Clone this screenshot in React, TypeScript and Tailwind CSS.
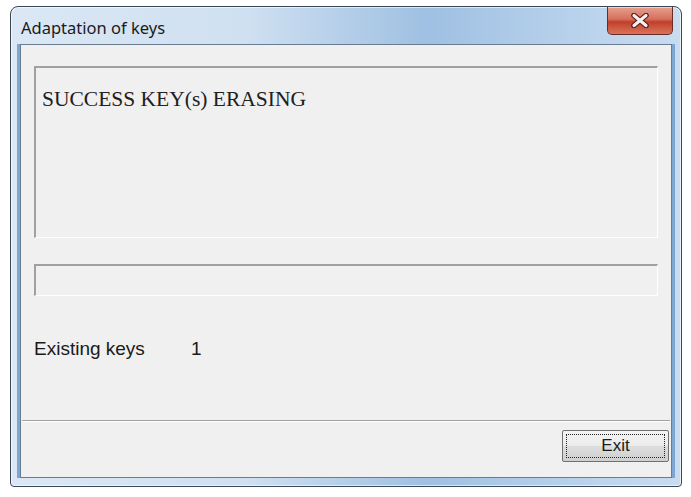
import { useState } from "react";

function CloseGlyph() {
  return (
    <svg width="20" height="15" viewBox="0 0 20 15" aria-hidden="true">
      <path d="M4 2.5 L16 12.5 M16 2.5 L4 12.5" stroke="#5a1a14" strokeWidth="5.5" strokeLinecap="round" />
      <path d="M4 2.5 L16 12.5 M16 2.5 L4 12.5" stroke="#f4f1f0" strokeWidth="3.2" strokeLinecap="round" />
    </svg>
  );
}

export default function App() {
  const [keys] = useState(1);

  return (
    <div className="h-[497px] w-[691px] bg-white pl-[10px] pt-[6px] font-['Liberation_Sans',Arial,sans-serif]">
      <div className="flex h-[481px] w-[672px] flex-col rounded-t-[8px] rounded-b-[4px] border border-[#3a4756] bg-[linear-gradient(90deg,#dbe7f4_0%,#cfe0f1_35%,#9fc0e2_62%,#b9d2ec_85%,#c9dcf0_100%)] px-[9px] pb-[8px] shadow-[inset_0_0_0_1px_rgba(255,255,255,0.6)]">
        {/* Title bar */}
        <div className="flex h-[37px] items-start">
          <span className="mt-[11px] ml-[1px] font-['Noto_Sans',sans-serif] text-[16.5px] leading-[20px] text-[#1b1b1b]">
            Adaptation of keys
          </span>
          <button className="ml-auto mr-[-1px] flex h-[28px] w-[66px] items-center justify-center rounded-b-[5px] border border-t-0 border-[#6b2a23] bg-[linear-gradient(180deg,#e7a08f_0%,#d4705c_45%,#c0402a_55%,#d9735c_100%)] shadow-[inset_0_1px_0_rgba(255,255,255,0.5)]">
            <CloseGlyph />
          </button>
        </div>

        {/* Client area */}
        <div className="flex flex-1 flex-col border border-[#6a7c90] bg-[#f0f0f0] shadow-[-3px_0_0_#7ea6d3,3px_0_0_#7ea6d3]">
          <div className="mx-[13px] mt-[21px] h-[172px] border-t-2 border-l-2 border-r border-b border-t-[#a0a0a0] border-l-[#a0a0a0] border-r-white border-b-white px-[6px] pt-[18px]">
            <p className="font-['Liberation_Serif','Times_New_Roman',serif] text-[21.5px] leading-[26px] text-[#202020]">
              SUCCESS KEY(s) ERASING
            </p>
          </div>

          <div className="mx-[13px] mt-[26px] h-[32px] border-t-2 border-l-2 border-r border-b border-t-[#a0a0a0] border-l-[#a0a0a0] border-r-white border-b-white" />

          <div className="ml-[13px] mt-[42px] flex items-center text-[19px] leading-[22px] text-[#1a1a1a]">
            <span className="w-[157px]">Existing keys</span>
            <span>{keys}</span>
          </div>

          <div className="mx-[1px] mt-[60px] border-t border-b border-t-[#a0a0a0] border-b-white" />

          <div className="flex justify-end pr-[2px] pt-[8px]">
            <button className="flex h-[32px] w-[107px] items-center justify-center rounded-[2px] border border-[#707070] bg-[linear-gradient(180deg,#f4f4f4_0%,#ebebeb_50%,#dddddd_51%,#cfcfcf_100%)] p-[3px]">
              <span className="flex h-full w-full items-center justify-center border border-dotted border-[#222] text-[17px] text-[#1a1a1a]">
                Exit
              </span>
            </button>
          </div>
        </div>
      </div>
    </div>
  );
}
